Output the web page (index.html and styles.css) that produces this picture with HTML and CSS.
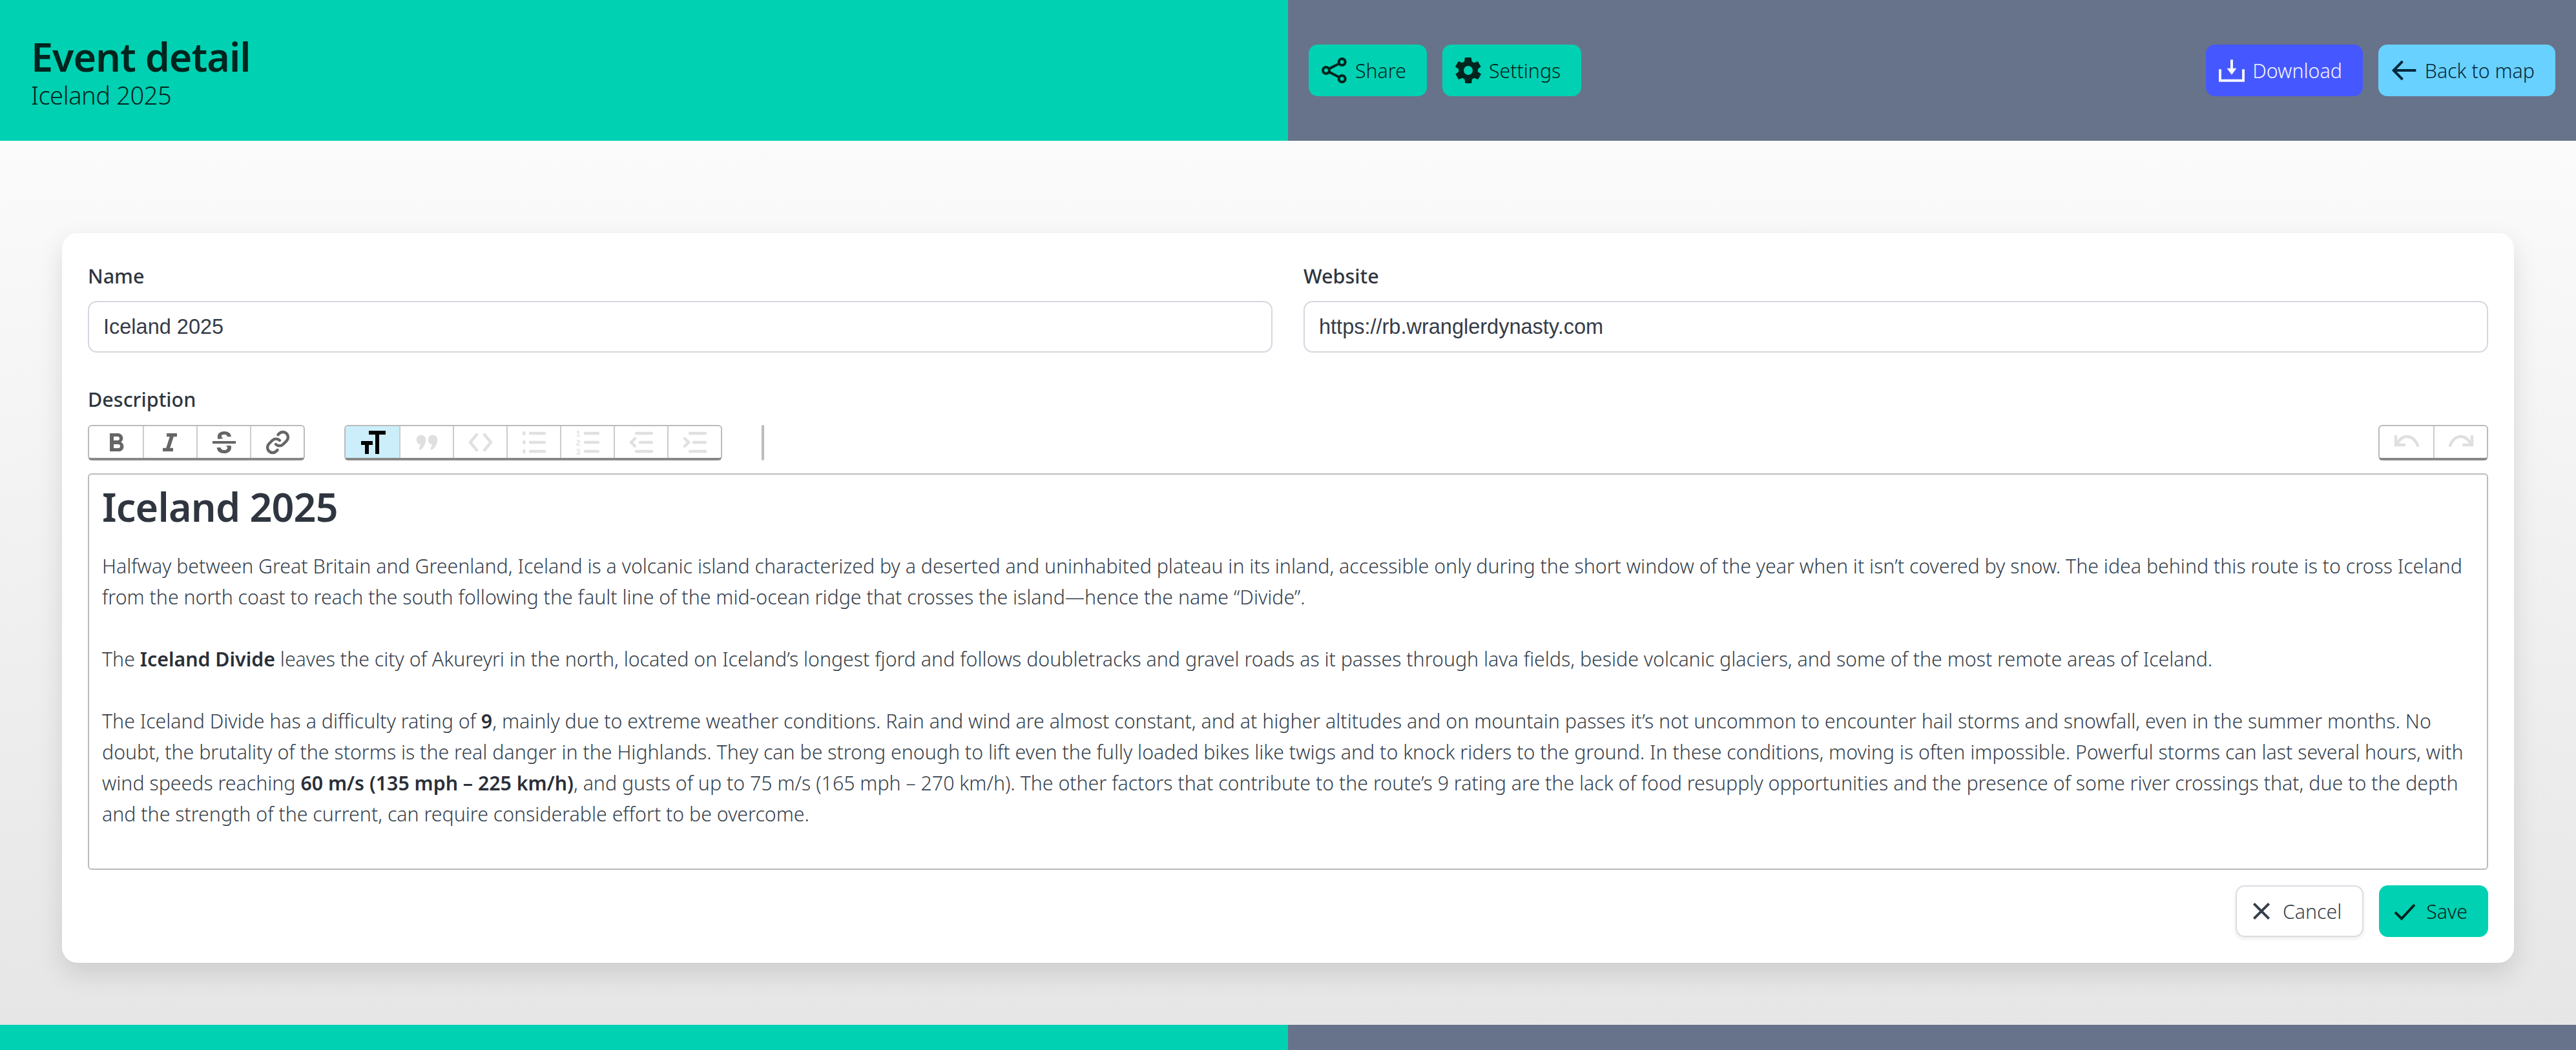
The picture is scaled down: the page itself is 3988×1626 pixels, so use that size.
FILE: index.html
```html
<!DOCTYPE html>
<html lang="en">
<head>
    <meta charset="UTF-8">
    <title>Event detail</title>
    <link rel="stylesheet" href="styles.css">
</head>
<body>
    <header class="split top">
        <div class="side green titlebox">
            <h1>Event detail</h1>
            <p>Iceland 2025</p>
        </div>
        <div class="side slate actions">
            <a class="btn btn-green">
                <svg class="ico" viewBox="0 0 24 24"><circle cx="19" cy="4.2" r="3"/><circle cx="4.2" cy="12" r="3"/><circle cx="19" cy="19.800" r="3"/><path d="M7 10.500 16.200 5.700M7 13.500l9.200 4.800"/></svg>
                Share
            </a>
            <a class="btn btn-green">
                <svg class="ico solid" viewBox="2 2 20 20"><path d="M19.400 13a7.600 7.600 0 0 0 0-2l2.100-1.600a.5.5 0 0 0 .1-.7l-2-3.400a.5.5 0 0 0-.6-.2l-2.500 1a7.300 7.300 0 0 0-1.700-1l-.4-2.700a.5.5 0 0 0-.5-.4h-4a.5.5 0 0 0-.5.4l-.4 2.700a7.300 7.300 0 0 0-1.700 1l-2.500-1a.5.5 0 0 0-.6.2l-2 3.400a.5.5 0 0 0 .1.7L4.600 11a7.600 7.600 0 0 0 0 2l-2.100 1.600a.5.5 0 0 0-.1.7l2 3.400a.5.5 0 0 0 .6.2l2.500-1a7.300 7.300 0 0 0 1.700 1l.4 2.700a.5.5 0 0 0 .5.4h4a.5.5 0 0 0 .5-.4l.4-2.700a7.300 7.300 0 0 0 1.700-1l2.500 1a.5.5 0 0 0 .6-.2l2-3.400a.5.5 0 0 0-.1-.7zM12 15.500a3.500 3.500 0 1 1 0-7 3.500 3.500 0 0 1 0 7z"/></svg>
                Settings
            </a>
            <span class="spacer"></span>
            <a class="btn btn-blue">
                <svg class="ico" viewBox="0 0 24 24"><path d="M1.200 11v10.500h21.600V11"/><path d="M12 2v9"/><path class="fill" d="M7.500 10h9L12 16z"/></svg>
                Download
            </a>
            <a class="btn btn-sky">
                <svg class="ico" viewBox="0 0 24 24"><path d="M23 12H2.500M10.500 3.500 2.200 12l8.300 8.500"/></svg>
                Back to map
            </a>
        </div>
    </header>

    <main class="page">
        <form class="card">
            <div class="fields">
                <div class="field">
                    <label>Name</label>
                    <input class="input" type="text" value="Iceland 2025">
                </div>
                <div class="field">
                    <label>Website</label>
                    <input class="input" type="text" value="https://rb.wranglerdynasty.com">
                </div>
            </div>

            <label>Description</label>
            <div class="toolbar">
                <div class="tools">
                    <span class="tool"><svg viewBox="0 0 24 24"><path d="M15.600 11.800c1-.7 1.600-1.800 1.600-2.800a4 4 0 0 0-4-4H7v14h7c2.100 0 3.700-1.700 3.700-3.800 0-1.500-.8-2.800-2.100-3.400zM10 7.500h3a1.500 1.500 0 1 1 0 3h-3v-3zm3.500 9H10v-3h3.500a1.500 1.500 0 1 1 0 3z"/></svg></span>
                    <span class="tool"><svg viewBox="0 0 24 24"><path d="M9 5v2.600h2.400L8.600 16.400H6V19h8v-2.600h-2.400l2.800-8.800H17V5z"/></svg></span>
                    <span class="tool"><svg viewBox="0 0 24 24"><path d="M3 11h18v2H3zM7.300 9.500c-.3-.6-.4-1.200-.4-1.900C6.900 5 9.300 3.500 12.100 3.500c2.900 0 5.300 1.500 5.300 4.100h-3c0-1.100-1-1.700-2.300-1.700-1.400 0-2.200.6-2.200 1.500 0 .8.700 1.300 1.700 1.600zM17.200 14.500c.2.500.3 1 .3 1.600 0 2.800-2.500 4.400-5.500 4.400-3.100 0-5.600-1.600-5.600-4.500h3c0 1.300 1.100 2 2.600 2 1.400 0 2.500-.6 2.500-1.800 0-.7-.4-1.300-1.100-1.700z"/></svg></span>
                    <span class="tool"><svg class="line" viewBox="0 0 24 24"><path d="M10.500 13.500a4 4 0 0 0 5.700 0l2.600-2.600a4 4 0 0 0-5.700-5.700l-.9.900"/><path d="M13.500 10.500a4 4 0 0 0-5.700 0l-2.600 2.600a4 4 0 0 0 5.700 5.700l.9-.9"/></svg></span>
                </div>
                <div class="tools">
                    <span class="tool on"><svg viewBox="0 0 24 24"><path d="M9 3v3h5v15h3V6h5V3zM3 11v3h3v7h3v-7h3v-3z"/></svg></span>
                    <span class="tool off"><svg viewBox="0 0 24 24"><circle cx="7.500" cy="10" r="3.700"/><circle cx="16.500" cy="10" r="3.700"/><path d="M11 10c0 3.500-1.800 6.500-4.500 8l-.8-1.200c1-1.500 1.300-2.800 1.300-4zM20 10c0 3.500-1.800 6.500-4.500 8l-.8-1.200c1-1.500 1.300-2.800 1.300-4z"/></svg></span>
                    <span class="tool off"><svg class="line" viewBox="0 0 24 24"><path d="M9 6l-5 6 5 6M15 6l5 6-5 6"/></svg></span>
                    <span class="tool off"><svg class="line" viewBox="0 0 24 24"><path d="M9 5h11M9 12h11M9 19h11M4.200 4.500v1M4.200 11.500v1M4.200 18.500v1"/></svg></span>
                    <span class="tool off"><svg class="line" viewBox="0 0 24 24"><path d="M10 5h10M10 12h10M10 19h10"/><text x="4.500" y="7.500">1</text><text x="4.500" y="14.500">2</text><text x="4.500" y="21.500">3</text></svg></span>
                    <span class="tool off"><svg class="line" viewBox="0 0 24 24"><path d="M8 5h12M11 12h9M8 19h12M7 9l-3 3 3 3"/></svg></span>
                    <span class="tool off"><svg class="line" viewBox="0 0 24 24"><path d="M8 5h12M11 12h9M8 19h12M4 9l3 3-3 3"/></svg></span>
                </div>
                <span class="rule"></span>
                <span class="spacer"></span>
                <div class="tools">
                    <span class="tool off"><svg class="line" viewBox="0 0 24 24"><path d="M3.500 7.500V14H10M4.500 13c2-3.500 4.500-5.500 7.500-5.500 4 0 7 3 8.500 7"/></svg></span>
                    <span class="tool off"><svg class="line" viewBox="0 0 24 24"><path d="M20.500 7.500V14H14M19.500 13c-2-3.500-4.500-5.500-7.500-5.500-4 0-7 3-8.500 7"/></svg></span>
                </div>
            </div>

            <div class="editor">
                <h2>Iceland 2025</h2>
                Halfway between Great Britain and Greenland, Iceland is a volcanic island characterized by a deserted and uninhabited plateau in its inland, accessible only during the short window of the year when it isn’t covered by snow. The idea behind this route is to cross Iceland<br>
                from the north coast to reach the south following the fault line of the mid-ocean ridge that crosses the island—hence the name “Divide”.<br><br>
                The <strong>Iceland Divide</strong> leaves the city of Akureyri in the north, located on Iceland’s longest fjord and follows doubletracks and gravel roads as it passes through lava fields, beside volcanic glaciers, and some of the most remote areas of Iceland.<br><br>
                The Iceland Divide has a difficulty rating of <strong>9</strong>, mainly due to extreme weather conditions. Rain and wind are almost constant, and at higher altitudes and on mountain passes it’s not uncommon to encounter hail storms and snowfall, even in the summer months. No<br>
                doubt, the brutality of the storms is the real danger in the Highlands. They can be strong enough to lift even the fully loaded bikes like twigs and to knock riders to the ground. In these conditions, moving is often impossible. Powerful storms can last several hours, with<br>
                wind speeds reaching <strong>60 m/s (135 mph – 225 km/h)</strong>, and gusts of up to 75 m/s (165 mph – 270 km/h). The other factors that contribute to the route’s 9 rating are the lack of food resupply opportunities and the presence of some river crossings that, due to the depth<br>
                and the strength of the current, can require considerable effort to be overcome.
            </div>

            <div class="formbtns">
                <a class="btn btn-white">
                    <svg class="ico" viewBox="0 0 24 24"><path d="M5 5l14 14M19 5L5 19"/></svg>
                    Cancel
                </a>
                <a class="btn btn-green">
                    <svg class="ico" viewBox="0 0 24 24"><path d="M3 13l6 6L21 6"/></svg>
                    Save
                </a>
            </div>
        </form>
    </main>

    <footer class="split bottom">
        <div class="side green"></div>
        <div class="side slate"></div>
    </footer>
</body>
</html>
```

FILE: styles.css
```css
* {
    box-sizing: border-box;
}

body {
    margin: 0;
    min-height: 100vh;
    display: flex;
    flex-direction: column;
    font-family: "Noto Sans", sans-serif;
    font-size: 30.3px;
    font-weight: 300;
    color: #363f4b;
}

.split {
    display: grid;
    grid-template-columns: 1994px 1fr;
}
.top {height: 218px;}
.bottom {height: 39px;}
.green {background: #00d1b2;}
.slate {background: #67738a;}

.titlebox {
    padding: 50px 48px 0;
    color: #00241e;
}
.titlebox h1 {
    margin: 0;
    font-size: 61px;
    line-height: 76px;
    font-weight: 600;
    letter-spacing: -1px;
}
.titlebox p {
    margin: 0;
    font-size: 38px;
    line-height: 42px;
    letter-spacing: -0.4px;
}

.actions {
    display: flex;
    align-items: center;
    gap: 24px;
    padding: 0 32px;
}
.actions .btn {gap: 12px;}
.spacer {flex: 1;}

.btn {
    display: flex;
    align-items: center;
    gap: 13px;
    height: 80px;
    padding: 0 32px 0 20px;
    border-radius: 14px;
    white-space: nowrap;
}
.btn-green {background: #00d1b2; color: #00241e;}
.btn-blue {background: #4558ff; color: #f4f6ff;}
.btn-sky {background: #68d1ff; color: #04283c;}
.btn-white {
    padding-left: 18px;
    background: #fff;
    color: #363f4b;
    border: 2px solid #dcdde3;
    box-shadow: 0 3px 6px rgba(0, 0, 0, 0.08);
}

.ico {
    width: 40px;
    height: 40px;
    flex: none;
    fill: none;
    stroke: currentColor;
    stroke-width: 2.4;
}
.ico.solid {fill: currentColor; stroke: none;}
.ico .fill {fill: currentColor; stroke: none;}

.page {
    flex: 1;
    padding: 143px 96px 0;
    background: linear-gradient(#fbfbfb, #e6e6e6);
}
.card {
    height: 1130px;
    padding: 42px 40px 40px;
    background: #fff;
    border-radius: 24px;
    box-shadow: 0 16px 40px rgba(0, 0, 0, 0.12);
}

label {
    display: block;
    font-size: 30.5px;
    font-weight: 500;
    line-height: 48px;
    color: #2f3640;
}

.fields {
    display: grid;
    grid-template-columns: 1fr 1fr;
    gap: 48px;
    margin-bottom: 48px;
}
.field label {margin-bottom: 15px;}
.input {
    display: block;
    width: 100%;
    height: 80px;
    padding: 0 22px;
    border: 2px solid #d5d8e0;
    border-radius: 14px;
    font-family: "Liberation Sans", Arial, sans-serif;
    font-size: 32.5px;
    color: #363c48;
}

.toolbar {
    display: flex;
    align-items: flex-start;
    margin-top: 16px;
    gap: 61px;
}
.tools {
    display: flex;
    height: 55px;
    border: 2px solid #bbb;
    border-bottom: 4px solid #888;
    border-radius: 6px;
    overflow: hidden;
    background: #fff;
}
.tool {
    width: 83px;
    display: flex;
    align-items: center;
    justify-content: center;
    border-left: 2px solid #ccc;
}
.tool:first-child {border-left: 0;}
.tool svg {
    width: 48px;
    height: 48px;
    fill: #666;
}
.tool svg.line {
    fill: none;
    stroke: #666;
    stroke-width: 2.2;
    stroke-linecap: round;
}
.tool.on {background: #cbeefa;}
.tool.on svg {fill: #000;}
.tool.off svg {opacity: 0.2;}
.tool text {
    font-family: "Liberation Sans", sans-serif;
    font-size: 6px;
    font-weight: 700;
    fill: #666;
    stroke: none;
    text-anchor: middle;
}
.rule {
    width: 4px;
    height: 55px;
    background: #bbb;
    border-radius: 2px;
}

.editor {
    height: 614px;
    margin-top: 20px;
    padding: 10px 20px;
    border: 2px solid #bbb;
    border-radius: 6px;
    line-height: 48px;
    white-space: nowrap;
}
.editor h2 {
    margin: 0 0 28px;
    font-size: 61px;
    line-height: 80px;
    font-weight: 600;
    letter-spacing: -0.8px;
    color: #2f3640;
}
.editor strong {
    font-weight: 600;
    color: #2a2f38;
}

.formbtns {
    display: flex;
    justify-content: flex-end;
    gap: 24px;
    margin-top: 24px;
}
```
